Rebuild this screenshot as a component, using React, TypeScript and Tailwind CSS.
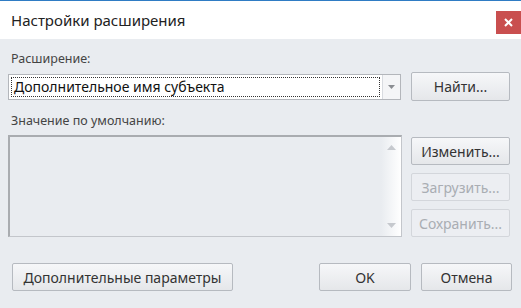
import React from 'react';

const btn =
  'h-[28px] rounded-[2px] border border-[#b6bac0] bg-gradient-to-b from-[#f6f7f9] to-[#e5e7ea] text-[14px] text-[#333] flex items-center justify-center';
const btnDisabled =
  'h-[28px] rounded-[2px] border border-[#d3d6db] bg-[#eceef2] text-[14px] text-[#a9adb3] flex items-center justify-center';

const App: React.FC = () => {
  return (
    <div className="w-[521px] h-[308px] bg-[#e9ecf0] flex flex-col border-t border-[#2f7cc4] font-['Noto_Sans',sans-serif] overflow-hidden">
      {/* title bar */}
      <div className="h-[38px] bg-white flex justify-between shrink-0">
        <div className="pl-[11px] pt-[8px] text-[15px] text-[#222]">Настройки расширения</div>
        <div className="mt-[10px] w-[25px] h-[23px] bg-[#c94f4f] flex items-center justify-center">
          <svg width="9" height="9" viewBox="0 0 9 9">
            <path d="M1 1 L8 8 M8 1 L1 8" stroke="white" strokeWidth="2" />
          </svg>
        </div>
      </div>

      <div className="flex flex-col px-2">
        <div className="pl-[3px] pt-[12px] text-[12.5px] leading-[16px] text-[#444]">Расширение:</div>
        <div className="flex items-center mt-[5px]">
          <div className="w-[393px] h-[26px] border border-[#b3b6bb] bg-white flex">
            <div className="flex-1 m-[2px] border border-dotted border-[#333] flex items-center pl-[2px] text-[14px] text-[#111]">
              Дополнительное имя субъекта
            </div>
            <div className="w-[18px] flex items-center justify-center border-l border-[#d8dbe0] bg-[#f4f5f7]">
              <svg width="7" height="4" viewBox="0 0 7 4">
                <path d="M0 0 L7 0 L3.5 4 Z" fill="#8a8d92" />
              </svg>
            </div>
          </div>
          <button className={`${btn} w-[99px] h-[29px] ml-auto mr-[3px]`}>Найти...</button>
        </div>

        <div className="pl-[3px] pt-[12px] text-[12.5px] leading-[16px] text-[#444]">Значение по умолчанию:</div>

        <div className="flex mt-[6px]">
          <div className="w-[394px] h-[102px] border-l-2 border-t-2 border-[#a9acb0] border-r border-b border-r-[#c3c6cb] border-b-[#c3c6cb] flex justify-end">
            <div className="w-[20px] flex flex-col items-center justify-between py-[8px] bg-gradient-to-r from-[#e9ecf0] to-white">
              <svg width="9" height="5" viewBox="0 0 9 5">
                <path d="M0 5 L9 5 L4.5 0 Z" fill="#c6c9ce" />
              </svg>
              <svg width="9" height="5" viewBox="0 0 9 5">
                <path d="M0 0 L9 0 L4.5 5 Z" fill="#c6c9ce" />
              </svg>
            </div>
          </div>
          <div className="ml-auto mr-[3px] mt-[2px] flex flex-col gap-[8px] w-[99px]">
            <button className={btn}>Изменить...</button>
            <button className={btnDisabled}>Загрузить...</button>
            <button className={btnDisabled}>Сохранить...</button>
          </div>
        </div>

        <div className="flex items-center mt-[26px] pl-[4px] pr-[1px]">
          <button className={`${btn} w-[221px]`}>Дополнительные параметры</button>
          <button className={`${btn} w-[92px] ml-auto`}>OK</button>
          <button className={`${btn} w-[91px] ml-[10px]`}>Отмена</button>
        </div>
      </div>
    </div>
  );
};

export default App;
